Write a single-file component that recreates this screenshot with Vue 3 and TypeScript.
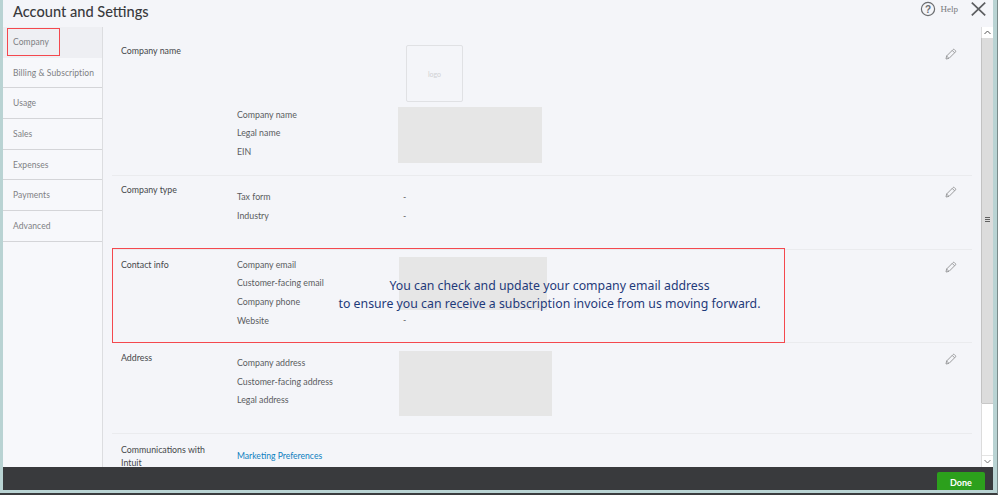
<script setup lang="ts">
const nav = ['Company', 'Billing & Subscription', 'Usage', 'Sales', 'Expenses', 'Payments', 'Advanced']
</script>

<template>
  <div class="screen">
    <div class="window">
      <header class="top">
        <h1 class="title">Account and Settings</h1>
        <div class="tools">
          <svg class="help-icon" width="16" height="16" viewBox="0 0 16 16">
            <circle cx="8" cy="8" r="6.6" fill="none" stroke="#6b6d70" stroke-width="1.2" />
            <text x="8" y="11.6" text-anchor="middle" class="q">?</text>
          </svg>
          <span class="help">Help</span>
          <svg class="close" width="15" height="14" viewBox="0 0 15 14">
            <path d="M.8.6 14.2 13.4M14.2.6.8 13.4" stroke="#5c5e61" stroke-width="1.7" fill="none" />
          </svg>
        </div>
      </header>

      <div class="middle">
        <nav class="side">
          <div v-for="(n, i) in nav" :key="n" class="nav-item" :class="{ active: i === 0 }">{{ n }}</div>
        </nav>

        <main class="content">
          <section class="row row-name">
            <div class="label">Company name</div>
            <div class="body">
              <div class="logo">logo</div>
              <div class="fields-line">
                <div class="fields">
                  <div>Company name</div>
                  <div>Legal name</div>
                  <div>EIN</div>
                </div>
                <div class="block block-name"></div>
              </div>
            </div>
            <svg class="pencil" width="12" height="12" viewBox="0 0 12 12"><path d="M1 11 1.6 8 8 1.6a1 1 0 0 1 1.4 0l1 1a1 1 0 0 1 0 1.4L4 10.4Z M7.2 2.4 9.6 4.8 M1.6 8 4 10.4" fill="none" stroke="#9b9c9e" stroke-width="1" /></svg>
          </section>

          <section class="row row-type">
            <div class="label">Company type</div>
            <div class="body">
              <div class="fields-line">
                <div class="fields">
                  <div>Tax form</div>
                  <div>Industry</div>
                </div>
                <div class="values">
                  <div>-</div>
                  <div>-</div>
                </div>
              </div>
            </div>
            <svg class="pencil" width="12" height="12" viewBox="0 0 12 12"><path d="M1 11 1.6 8 8 1.6a1 1 0 0 1 1.4 0l1 1a1 1 0 0 1 0 1.4L4 10.4Z M7.2 2.4 9.6 4.8 M1.6 8 4 10.4" fill="none" stroke="#9b9c9e" stroke-width="1" /></svg>
          </section>

          <section class="row row-contact">
            <div class="label">Contact info</div>
            <div class="body">
              <div class="fields-line">
                <div class="fields">
                  <div>Company email</div>
                  <div>Customer-facing email</div>
                  <div>Company phone</div>
                  <div>Website</div>
                </div>
                <div class="contact-values">
                  <div class="block block-contact"></div>
                  <div class="dash">-</div>
                </div>
              </div>
            </div>
            <svg class="pencil" width="12" height="12" viewBox="0 0 12 12"><path d="M1 11 1.6 8 8 1.6a1 1 0 0 1 1.4 0l1 1a1 1 0 0 1 0 1.4L4 10.4Z M7.2 2.4 9.6 4.8 M1.6 8 4 10.4" fill="none" stroke="#9b9c9e" stroke-width="1" /></svg>
          </section>

          <section class="row row-address">
            <div class="label">Address</div>
            <div class="body">
              <div class="fields-line">
                <div class="fields">
                  <div>Company address</div>
                  <div>Customer-facing address</div>
                  <div>Legal address</div>
                </div>
                <div class="block block-address"></div>
              </div>
            </div>
            <svg class="pencil" width="12" height="12" viewBox="0 0 12 12"><path d="M1 11 1.6 8 8 1.6a1 1 0 0 1 1.4 0l1 1a1 1 0 0 1 0 1.4L4 10.4Z M7.2 2.4 9.6 4.8 M1.6 8 4 10.4" fill="none" stroke="#9b9c9e" stroke-width="1" /></svg>
          </section>

          <section class="row row-comm">
            <div class="label">Communications with Intuit</div>
            <div class="body"><a class="link">Marketing Preferences</a></div>
          </section>
        </main>

        <div class="scrollbar">
          <div class="sb-btn">
            <svg width="7" height="5" viewBox="0 0 7 5"><path d="M.5 4 3.5 1l3 3" fill="none" stroke="#555" stroke-width="1" /></svg>
          </div>
          <div class="sb-thumb">
            <span class="grip"></span>
          </div>
          <div class="sb-track"></div>
          <div class="sb-btn sb-btn-end">
            <svg width="7" height="5" viewBox="0 0 7 5"><path d="M.5 1l3 3 3-3" fill="none" stroke="#777" stroke-width="1" /></svg>
          </div>
        </div>
      </div>

      <footer class="bottom">
        <button class="done">Done</button>
      </footer>
    </div>

    <div class="mark mark-nav"></div>
    <div class="mark mark-contact"></div>
    <p class="note">You can check and update your company email address<br />to ensure you can receive a subscription invoice from us moving forward.</p>
  </div>
</template>

<style>
html, body { margin: 0; }
</style>

<style scoped>
.screen {
  position: relative;
  width: 998px;
  height: 495px;
  overflow: hidden;
  background: #b9d3d3;
  padding: 0 4px 3px 3px;
  box-sizing: border-box;
  border-bottom: 2px solid #3a3c3e;
  border-right: 1px solid #7a8a8a;
  font-family: Lato, "Liberation Sans", sans-serif;
  font-size: 8.8px;
  color: #5a5c5f;
}
.window {
  height: 100%;
  display: flex;
  flex-direction: column;
  background: #f4f5f9;
}
.top {
  height: 27px;
  flex: none;
  display: flex;
  justify-content: space-between;
  align-items: flex-start;
  padding: 0 7px 0 10px;
}
.title {
  margin: 3px 0 0;
  font-size: 14.6px;
  line-height: 17px;
  font-weight: 500;
  color: #393a3d;
  font-family: Lato, sans-serif;
}
.tools { display: flex; align-items: center; margin-top: 1px; }
.q { font: 700 10px "Liberation Sans", sans-serif; fill: #6b6d70; }
.help {
  margin-left: 5px;
  margin-right: 13px;
  font: 9px "Liberation Serif", serif;
  color: #77797c;
}
.close { display: block; }
.middle { flex: 1; min-height: 0; display: flex; }
.side {
  width: 99px;
  flex: none;
  border-right: 1px solid #dcdde0;
  background: #f7f8fb;
}
.nav-item {
  height: 29.7px;
  line-height: 31.5px;
  padding-left: 10px;
  border-bottom: 1px solid #d4d5d8;
  color: #7e8083;
  font-size: 8.5px;
  letter-spacing: .08px;
  white-space: nowrap;
}
.nav-item.active { background: #eeeff3; border-bottom-color: #eeeff3; }
.content {
  flex: 1;
  min-width: 0;
  overflow: hidden;
  padding: 0 9px;
}
.row {
  position: relative;
  display: flex;
  padding-left: 9px;
  border-bottom: 1.5px solid #eaebee;
  box-sizing: border-box;
  line-height: 18.7px;
}
.row-name { height: 149px; padding-top: 18px; }
.row-type { height: 74px; padding-top: 6px; }
.row-contact { height: 93px; padding-top: 5.5px; }
.row-address { height: 91px; padding-top: 5px; }
.row-comm { border-bottom: 0; padding-top: 7px; }
.label {
  width: 116px;
  flex: none;
  color: #45474a;
  line-height: 13px;
  padding-right: 10px;
  box-sizing: border-box;
}
.row-name .label { margin-top: -1px; }
.row-type .label { margin-top: 1px; }
.row-contact .label { margin-top: 2px; }
.row-address .label { margin-top: 3px; }
.row-comm .label { margin-top: 2px; }
.body { flex: 1; min-width: 0; }
.logo {
  width: 57px;
  height: 57px;
  box-sizing: border-box;
  margin: 0 0 5px 169px;
  border: 1px solid #e0e1e4;
  border-radius: 2px;
  text-align: center;
  line-height: 57px;
  color: #d0d1d4;
  font-size: 7px;
}
.fields-line { display: flex; align-items: flex-start; }
.fields { width: 162px; flex: none; }
.row-name .fields { margin-top: -1.5px; }
.row-type .fields-line { margin-top: 6px; }
.values { padding-left: 4px; }
.block { background: #e6e6e6; }
.block-name { width: 144px; height: 56px; margin-left: -1px; }
.contact-values { position: relative; }
.block-contact { width: 148px; height: 53px; margin-top: 1px; }
.dash { padding-left: 4px; margin-top: 1px; }
.block-address { width: 153px; height: 65px; margin-top: 3px; }
.row-address .fields { padding-top: 6px; }
.pencil { position: absolute; right: 15px; }
.row-name .pencil { top: 21px; }
.row-type .pencil { top: 10px; }
.row-contact .pencil { top: 11px; }
.row-address .pencil { top: 10px; }
.link { color: #0d7fc0; display: block; margin-top: 6px; font-size: 8.6px; }
.scrollbar {
  width: 11px;
  flex: none;
  display: flex;
  flex-direction: column;
  background: #fff;
  border-left: 1px solid #dcdcdc;
}
.sb-btn {
  height: 11px;
  flex: none;
  display: flex;
  align-items: center;
  justify-content: center;
  background: #fff;
}
.sb-btn-end { border-top: 1px solid #e4e4e4; }
.sb-thumb {
  height: 365px;
  flex: none;
  background: #dcdcdc;
  box-shadow: -1px 0 0 #c2c2c2, 0 1px 0 #c8c8c8;
  display: flex;
  align-items: flex-start;
  justify-content: center;
}
.grip {
  width: 5px;
  height: 5px;
  margin-top: 179px;
  background: repeating-linear-gradient(#606060 0 1px, transparent 1px 2px);
}
.sb-track { flex: 1; }
.bottom {
  height: 23px;
  flex: none;
  background: #393a3d;
  display: flex;
  justify-content: flex-end;
  padding: 5px 8px 0 0;
  box-sizing: border-box;
  overflow: hidden;
}
.done {
  width: 48px;
  height: 18px;
  border: 0;
  border-radius: 2px 2px 0 0;
  padding: 3px 0 0;
  background: #2ca01c;
  color: #fff;
  font: 700 9px Lato, sans-serif;
}
.mark { position: absolute; border: 1px solid #f4484e; box-sizing: border-box; }
.mark-nav { left: 7px; top: 28px; width: 53px; height: 28px; }
.mark-contact { left: 112px; top: 248px; width: 673px; height: 95px; }
.note {
  position: absolute;
  left: 299.5px;
  top: 277px;
  width: 500px;
  margin: 0;
  text-align: center;
  font: 12.3px/18px "Noto Sans", "Open Sans", sans-serif;
  color: #1f3a7a;
}
</style>
